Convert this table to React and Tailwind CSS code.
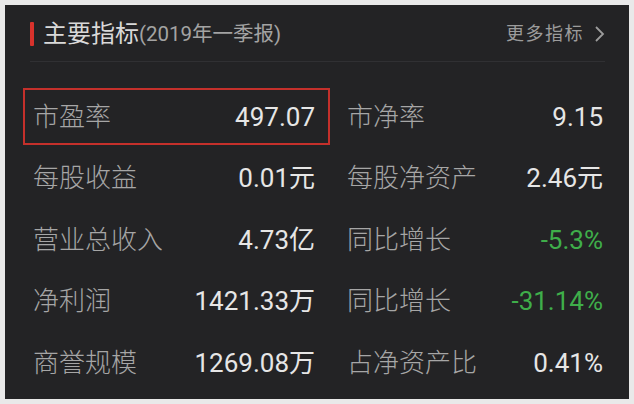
import React from "react";

const rows = [
  [["市盈率", "497.07", "v", true], ["市净率", "9.15", "v"]],
  [["每股收益", "0.01元", "v"], ["每股净资产", "2.46元", "v"]],
  [["营业总收入", "4.73亿", "v"], ["同比增长", "-5.3%", "g"]],
  [["净利润", "1421.33万", "v"], ["同比增长", "-31.14%", "g"]],
  [["商誉规模", "1269.08万", "v"], ["占净资产比", "0.41%", "v"]],
];

function Cell({ label, value, tone, boxed, left }) {
  return (
    <div
      className={
        "flex items-center justify-between h-[57px] " +
        (left ? "pl-[8px] pr-[13px] " : "pl-[8px] pr-[8px] ") +
        (boxed ? "border-2 border-[#c4302b]" : "border-2 border-transparent")
      }
    >
      <span className="text-[26px] font-light text-[#a6a6a6] leading-none">{label}</span>
      <span
        className={
          "text-[26px] leading-none " +
          (tone === "g" ? "text-[#3fae4a]" : "text-[#e6e6e6]")
        }
      >
        {value}
      </span>
    </div>
  );
}

export default function App() {
  return (
    <div
      className="w-[634px] h-[404px] bg-[#e9e9e9] p-[5px]"
      style={{ fontFamily: "Roboto, 'Noto Sans CJK SC', sans-serif" }}
    >
      <div className="w-[624px] h-[394px] bg-[#232325] flex flex-col">
        <div className="h-[56px] flex items-center pl-[25px] pr-[24px] pt-[2px]">
          <div className="w-[4px] h-[24px] bg-[#d8322c] rounded-[1px]" />
          <span className="ml-[9px] text-[24px] text-[#d9d9d9] leading-none">主要指标</span>
          <span className="text-[20.5px] text-[#a3a3a3] leading-none">(2019年一季报)</span>
          <div className="flex-1" />
          <span className="text-[18px] text-[#9c9c9c] leading-none tracking-[1.5px]">更多指标</span>
          <svg width="12" height="20" viewBox="0 0 12 20" className="ml-[9px]">
            <path d="M3 3 L10 10 L3 17" fill="none" stroke="#9c9c9c" strokeWidth="1.8" />
          </svg>
        </div>
        <div className="h-px bg-[#303033] ml-[25px] mr-[24px]" />
        <div className="mt-[26px] pl-[18px] pr-[16px] grid grid-cols-[307px_276px] gap-x-[7px] gap-y-[4.5px]">
          {rows.map((r, i) => (
            <React.Fragment key={i}>
              <Cell label={r[0][0]} value={r[0][1]} tone={r[0][2]} boxed={r[0][3]} left />
              <Cell label={r[1][0]} value={r[1][1]} tone={r[1][2]} />
            </React.Fragment>
          ))}
        </div>
      </div>
    </div>
  );
}
